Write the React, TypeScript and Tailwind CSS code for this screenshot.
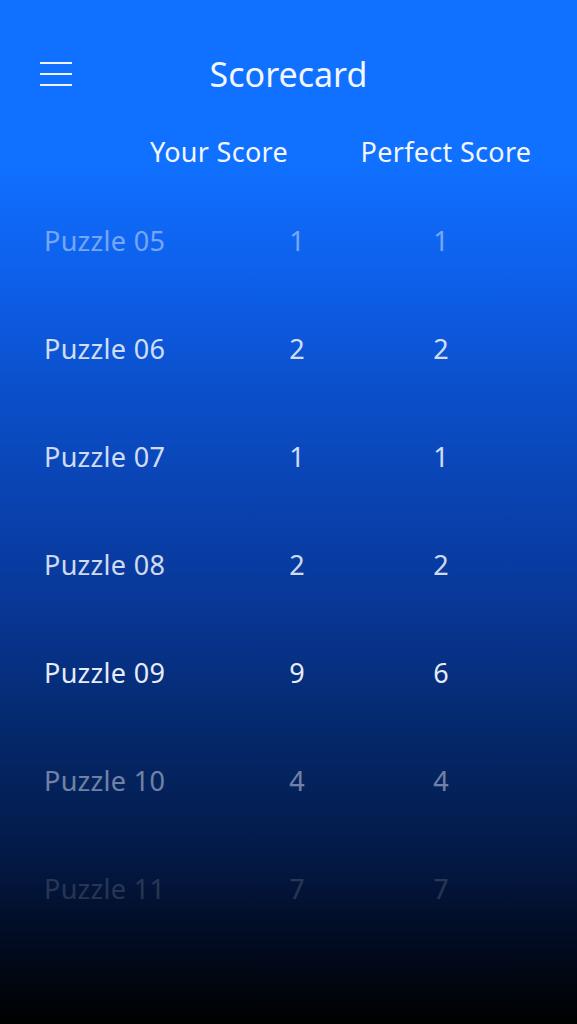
import React from 'react';

const rows = [
  { name: 'Puzzle 05', yours: 1, perfect: 1, fade: 'opacity-45' },
  { name: 'Puzzle 06', yours: 2, perfect: 2, fade: 'opacity-85' },
  { name: 'Puzzle 07', yours: 1, perfect: 1, fade: 'opacity-85' },
  { name: 'Puzzle 08', yours: 2, perfect: 2, fade: 'opacity-85' },
  { name: 'Puzzle 09', yours: 9, perfect: 6, fade: 'opacity-95' },
  { name: 'Puzzle 10', yours: 4, perfect: 4, fade: 'opacity-45' },
  { name: 'Puzzle 11', yours: 7, perfect: 7, fade: 'opacity-15' },
];

export default function App() {
  return (
    <div
      className="h-[1024px] w-full overflow-hidden text-[#f2f6ff] bg-[linear-gradient(180deg,#1070ff_0%,#1070ff_16%,#0d5ee8_28%,#0b4ec8_39%,#08389a_58%,#052a70_70%,#031a48_83%,#010818_94%,#000_100%)]"
      style={{ fontFamily: '"Noto Sans", "Open Sans", sans-serif' }}
    >
      {/* header */}
      <div className="flex items-center h-[64px] mt-[42px] px-[40px]">
        <button className="w-[32px] h-[26px] flex flex-col justify-between py-[1px]">
          <span className="block h-[2px] w-full bg-[#eef4ff]" />
          <span className="block h-[2px] w-full bg-[#eef4ff]" />
          <span className="block h-[2px] w-full bg-[#eef4ff]" />
        </button>
        <h1 className="flex-1 text-center text-[34px] font-normal mr-[32px]">Scorecard</h1>
      </div>

      {/* column headings */}
      <div className="flex items-center h-[40px] mt-[26px] pl-[130px] text-[27px] tracking-[0.3px]">
        <div className="w-[178px] text-center">Your Score</div>
        <div className="w-[220px] ml-[28px] text-center">Perfect Score</div>
      </div>

      {/* rows */}
      <div className="flex flex-col mt-[15px]">
        {rows.map((r) => (
          <div key={r.name} className={`flex items-center h-[108px] pl-[44px] text-[27px] tracking-[0.3px] ${r.fade}`}>
            <div className="w-[229px]">{r.name}</div>
            <div className="w-[48px] text-center">{r.yours}</div>
            <div className="w-[48px] ml-[96px] text-center">{r.perfect}</div>
          </div>
        ))}
      </div>
    </div>
  );
}
